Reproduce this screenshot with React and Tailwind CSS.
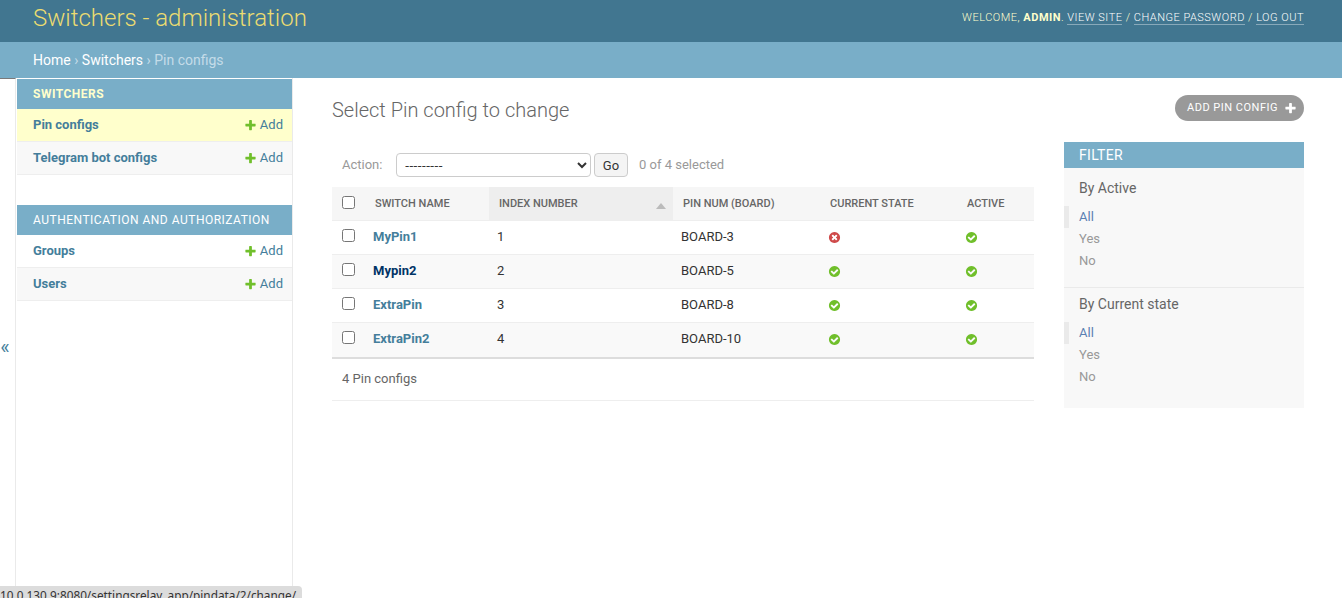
import React from 'react'

const PlusIcon = ({ className = '' }) => (
  <svg viewBox="0 0 1792 1792" className={className} fill="currentColor">
    <path d="M1600 736v192q0 40-28 68t-68 28h-416v416q0 40-28 68t-68 28h-192q-40 0-68-28t-28-68v-416h-416q-40 0-68-28t-28-68v-192q0-40 28-68t68-28h416v-416q0-40 28-68t68-28h192q40 0 68 28t28 68v416h416q40 0 68 28t28 68z" />
  </svg>
)

const YesIcon = () => (
  <svg viewBox="0 0 1792 1792" className="w-[13px] h-[13px] text-[#70bf2b]" fill="currentColor">
    <path d="M1412 734q0-28-18-46l-91-90q-19-19-45-19t-45 19l-408 407-226-226q-19-19-45-19t-45 19l-91 90q-18 18-18 46 0 27 18 45l362 362q19 19 45 19 27 0 46-19l543-543q18-18 18-45zm252 162q0 209-103 385.500t-279.500 279.500-385.500 103-385.500-103-279.500-279.500-103-385.500 103-385.500 279.500-279.500 385.500-103 385.500 103 279.500 279.500 103 385.500z" />
  </svg>
)

const NoIcon = () => (
  <svg viewBox="0 0 1792 1792" className="w-[13px] h-[13px] text-[#cf4a4a]" fill="currentColor">
    <path d="M1277 1122q0-26-19-45l-181-181 181-181q19-19 19-45 0-27-19-46l-90-90q-19-19-46-19-26 0-45 19l-181 181-181-181q-19-19-45-19-27 0-46 19l-90 90q-19 19-19 46 0 26 19 45l181 181-181 181q-19 19-19 45 0 27 19 46l90 90q19 19 46 19 26 0 45-19l181-181 181 181q19 19 45 19 27 0 46-19l90-90q19-19 19-46zm387-226q0 209-103 385.500t-279.500 279.500-385.500 103-385.500-103-279.500-279.500-103-385.500 103-385.500 279.500-279.500 385.500-103 385.500 103 279.500 279.500 103 385.500z" />
  </svg>
)

const Checkbox = () => (
  <input type="checkbox" className="w-[13px] h-[13px] m-0 block" />
)

const NavRow = ({ label, highlight = false, alt = false }) => (
  <div className={`flex items-center justify-between h-[33px] pl-4 pr-[9px] border-b border-[#eeeeee] text-[13px] ${highlight ? 'bg-[#ffffcc]' : alt ? 'bg-[#f8f8f8]' : 'bg-white'}`}>
    <span className="font-bold text-[#447e9b]">{label}</span>
    <span className="flex items-center gap-[3px] text-[#447e9b]">
      <PlusIcon className="w-[13px] h-[13px] text-[#70bf2b]" />
      Add
    </span>
  </div>
)

const rows = [
  { name: 'MyPin1', index: '1', pin: 'BOARD-3', state: false },
  { name: 'Mypin2', index: '2', pin: 'BOARD-5', state: true, hover: true, alt: true },
  { name: 'ExtraPin', index: '3', pin: 'BOARD-8', state: true },
  { name: 'ExtraPin2', index: '4', pin: 'BOARD-10', state: true, alt: true },
]

const FilterGroup = ({ title }) => (
  <div>
    <h3 className="text-sm text-[#666666] pl-[15px] h-[20px] leading-[20px]">{title}</h3>
    <ul className="mt-[8px] text-[13px] leading-[22px]">
      <li className="pl-[10px] border-l-[5px] border-[#eaeaea] text-[#5b80b2]">All</li>
      <li className="pl-[15px] text-[#999999]">Yes</li>
      <li className="pl-[15px] text-[#999999]">No</li>
    </ul>
  </div>
)

export default function App() {
  return (
    <div className="relative h-[598px] overflow-hidden bg-white text-[#333333] font-['Roboto',sans-serif] text-[13px]">
      {/* Header */}
      <div className="h-[42px] bg-[#417690] flex items-start justify-between pl-[33px] pr-[38px]">
        <h1 className="text-2xl leading-[36px] font-light text-[#ecdc70]">Switchers - administration</h1>
        <div className="mt-[11px] text-[11px] leading-[14px] tracking-[0.5px] font-light text-[#ffffcc]">
          WELCOME, <strong className="font-bold tracking-[0.5px]">ADMIN</strong>.{' '}
          <a className="text-white border-b border-[#ffffff60] font-light">VIEW SITE</a> /{' '}
          <a className="text-white border-b border-[#ffffff60] font-light">CHANGE PASSWORD</a> /{' '}
          <a className="text-white border-b border-[#ffffff60] font-light">LOG OUT</a>
        </div>
      </div>

      {/* Breadcrumbs */}
      <div className="h-[36px] bg-[#79aec8] pl-[33px] text-sm leading-[36px] text-[#c4dce8]">
        <span className="text-white">Home</span> › <span className="text-white">Switchers</span> › Pin configs
      </div>

      <div className="flex h-[520px]">
        {/* Collapse toggle */}
        <div className="w-[16px] shrink-0 border-r border-t border-[#eaeaea] border-t-[#79797a] flex items-center justify-center pt-[16px] text-xl text-[#447e9b]">
          <span className="-ml-[5px]">«</span>
        </div>

        {/* Sidebar */}
        <div className="w-[277px] shrink-0 border-r border-[#eaeaea] pt-px pl-px">
          <div className="h-[30px] bg-[#79aec8] pl-4 text-xs leading-[30px] font-bold tracking-[0.5px] text-[#ffffcc]">SWITCHERS</div>
          <NavRow label="Pin configs" highlight />
          <NavRow label="Telegram bot configs" alt />
          <div className="h-[30px] mt-[30px] bg-[#79aec8] pl-4 text-xs leading-[30px] tracking-[0.5px] text-white">AUTHENTICATION AND AUTHORIZATION</div>
          <NavRow label="Groups" />
          <NavRow label="Users" alt />
        </div>

        {/* Content */}
        <div className="flex-1 pl-[39px] pr-[38px]">
          <div className="flex items-start justify-between pt-[17px] h-[64px]">
            <h1 className="text-xl font-light text-[#666666] leading-[30px]">Select Pin config to change</h1>
            <div className="h-[26px] flex items-center gap-[6px] rounded-[15px] bg-[#999999] pl-3 pr-[7px] text-[11px] tracking-[0.5px] font-normal text-white">
              ADD PIN CONFIG
              <PlusIcon className="w-[13px] h-[13px]" />
            </div>
          </div>

          <div className="flex gap-[30px]">
            <div className="w-[702px] shrink-0">
              {/* Actions */}
              <div className="h-[45px] flex items-center pl-[10px] pt-[1px] text-[#999999]">
                <span className="w-[54px]">Action:</span>
                <select className="w-[195px] h-[24px] rounded-[4px] border border-[#cccccc] bg-white px-[4px] text-[13px] text-[#333333] font-['Noto_Sans',sans-serif]">
                  <option>---------</option>
                </select>
                <button className="ml-[3px] w-[34px] h-[24px] pt-px rounded-[4px] border border-[#cccccc] bg-[#f4f4f4] text-[13px] text-[#333333]">Go</button>
                <span className="ml-[11px]">0 of 4 selected</span>
              </div>

              {/* Table */}
              <div className="grid grid-cols-[33px_124px_184px_147px_137px_77px]">
                <div className="h-[34px] bg-[#f6f6f6] border-b border-[#eeeeee] flex items-center pl-[10px] pb-[3px]"><Checkbox /></div>
                {['SWITCH NAME', 'INDEX NUMBER', 'PIN NUM (BOARD)', 'CURRENT STATE', 'ACTIVE'].map((h) => (
                  <div key={h} className={`relative h-[34px] pt-px border-b border-[#eeeeee] flex items-center pl-[10px] text-[11px] font-medium text-[#666666] ${h === 'INDEX NUMBER' ? 'bg-[#eeeeee]' : 'bg-[#f6f6f6]'}`}>
                    {h}
                    {h === 'INDEX NUMBER' && (
                      <span className="absolute right-[7px] top-[16px] border-x-[5px] border-x-transparent border-b-[6px] border-b-[#bbbbbb]" />
                    )}
                  </div>
                ))}
                {rows.map((r, i) => {
                  const cell = `h-[34px] flex items-center border-b ${i === rows.length - 1 ? 'border-transparent' : 'border-[#eeeeee]'} ${r.alt ? 'bg-[#f9f9f9]' : 'bg-white'}`
                  return (
                    <React.Fragment key={r.name}>
                      <div className={`${cell} pl-[10px] pb-[5px]`}><Checkbox /></div>
                      <div className={`${cell} pl-[8px] pb-[2px] font-bold ${r.hover ? 'text-[#003366]' : 'text-[#447e9b]'}`}>{r.name}</div>
                      <div className={`${cell} pl-[8px] pb-[2px]`}>{r.index}</div>
                      <div className={`${cell} pl-[8px] pb-[2px]`}>{r.pin}</div>
                      <div className={`${cell} pl-[8px]`}>{r.state ? <YesIcon /> : <NoIcon />}</div>
                      <div className={`${cell} pl-[8px]`}><YesIcon /></div>
                    </React.Fragment>
                  )
                })}
              </div>

              {/* Paginator */}
              <div className="h-[44px] border-t-2 border-b border-t-[#dddddd] border-b-[#eeeeee] pl-[10px] leading-[40px] text-[#666666]">4 Pin configs</div>
            </div>

            {/* Filter */}
            <div className="w-[240px] shrink-0 h-[266px] bg-[#f8f8f8]">
              <div className="h-[26px] bg-[#79aec8] pl-[15px] text-sm leading-[26px] tracking-[0.3px] text-white">FILTER</div>
              <div className="pt-[10px]">
                <FilterGroup title="By Active" />
              </div>
              <div className="mt-[15px] border-t border-[#eaeaea] pt-[6px]">
                <FilterGroup title="By Current state" />
              </div>
            </div>
          </div>
        </div>
      </div>

      {/* Browser status bubble */}
      <div className="absolute left-0 bottom-0 h-[12px] w-[302px] overflow-hidden rounded-tr-[4px] bg-[#dcdcdc] font-['Noto_Sans',sans-serif] text-[11.8px] leading-[19px] whitespace-nowrap text-[#333333]">
        10.0.130.9:8080/settingsrelay_app/pindata/2/change/
      </div>
    </div>
  )
}
